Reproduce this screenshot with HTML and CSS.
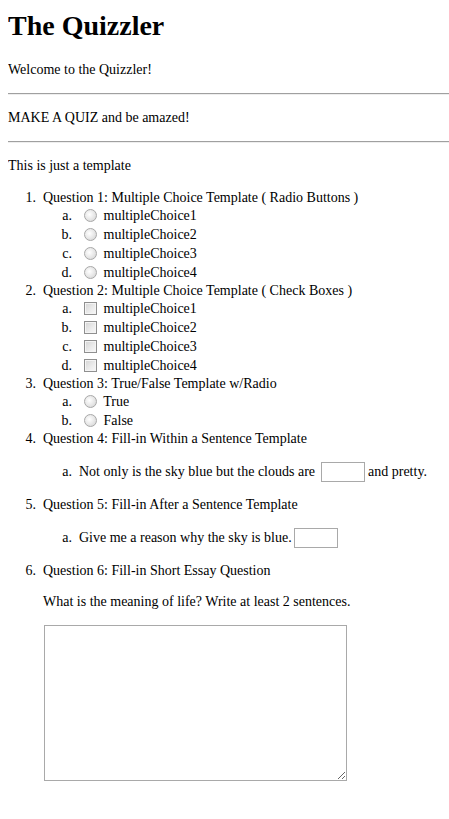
FILE: index.html
```html
<!DOCTYPE html>
<html>
<head>
<meta charset="utf-8">
<title>The Quizzler</title>
<link rel="stylesheet" href="styles.css">
</head>
<body>
<h1 class="title">The Quizzler</h1>
<p class="para">Welcome to the Quizzler!</p>
<hr class="rule">
<p class="para">MAKE A QUIZ and be amazed!</p>
<hr class="rule">
<p class="para">This is just a template</p>
<ol class="quiz">
  <li>Question 1: Multiple Choice Template ( Radio Buttons )
    <ol class="opts">
      <li><input class="radio" type="radio" name="q1"> multipleChoice1</li>
      <li><input class="radio" type="radio" name="q1"> multipleChoice2</li>
      <li><input class="radio" type="radio" name="q1"> multipleChoice3</li>
      <li><input class="radio" type="radio" name="q1"> multipleChoice4</li>
    </ol>
  </li>
  <li>Question 2: Multiple Choice Template ( Check Boxes )
    <ol class="opts">
      <li><input class="check" type="checkbox"> multipleChoice1</li>
      <li><input class="check" type="checkbox"> multipleChoice2</li>
      <li><input class="check" type="checkbox"> multipleChoice3</li>
      <li><input class="check" type="checkbox"> multipleChoice4</li>
    </ol>
  </li>
  <li>Question 3: True/False Template w/Radio
    <ol class="opts">
      <li><input class="radio" type="radio" name="q3"> True</li>
      <li><input class="radio" type="radio" name="q3"> False</li>
    </ol>
  </li>
  <li>Question 4: Fill-in Within a Sentence Template
    <ol class="opts spaced">
      <li>Not only is the sky blue but the clouds are <input class="blank" type="text"> and pretty.</li>
    </ol>
  </li>
  <li>Question 5: Fill-in After a Sentence Template
    <ol class="opts spaced">
      <li>Give me a reason why the sky is blue.<input class="blank" type="text"></li>
    </ol>
  </li>
  <li>Question 6: Fill-in Short Essay Question
    <p class="para">What is the meaning of life? Write at least 2 sentences.</p>
    <textarea class="essay"></textarea>
  </li>
</ol>
</body>
</html>
```

FILE: styles.css
```css
html {
  background: #fff;
}

body {
  margin: 10px 0 8px 8px;
  font-family: "Liberation Serif", "Times New Roman", serif;
  font-size: 14px;
  line-height: 18px;
  color: #000;
}

.title {
  font-size: 28px;
  line-height: 32px;
  font-weight: bold;
  margin: 0 0 19px;
}

.para {
  margin: 14px 0;
  line-height: 18px;
}

.rule {
  margin: 7px 0;
  border: 0;
  border-top: 1px solid #a0a0a0;
  border-bottom: 1px solid #eeeeee;
  height: 0;
}

.quiz {
  margin: 14px 0;
  padding-left: 35px;
}

.quiz > li {
  line-height: 17px;
}

.quiz > li::marker {
  content: counter(list-item) ".\2002";
}

.opts {
  list-style-type: lower-alpha;
  margin: 0;
  padding-left: 36px;
}

.opts > li {
  line-height: 19px;
}

.opts > li::marker {
  content: counter(list-item, lower-alpha) ".\2002";
}

.opts.spaced {
  margin: 14px 0;
}

.opts.spaced > li {
  line-height: 21px;
}

.radio {
  -webkit-appearance: none;
  appearance: none;
  width: 13px;
  height: 13px;
  box-sizing: border-box;
  margin: 0 3px 0 5px;
  border: 1px solid #a8a8a8;
  border-radius: 50%;
  background: radial-gradient(circle at 40% 40%, #ffffff 0%, #e6e6e6 55%, #cfcfcf 100%);
  vertical-align: -2px;
}

.check {
  -webkit-appearance: none;
  appearance: none;
  width: 13px;
  height: 13px;
  box-sizing: border-box;
  margin: 0 3px 0 5px;
  border: 1px solid #8f8f8f;
  box-shadow: inset 0 0 0 1px #f4f4f4;
  background: linear-gradient(135deg, #d4d4d4 0%, #ececec 60%, #f8f8f8 100%);
  vertical-align: -2px;
}

.blank {
  width: 44px;
  height: 20px;
  box-sizing: border-box;
  margin: 0 0 0 2px;
  padding: 0 2px;
  border: 1px solid #a9a9a9;
  font-family: inherit;
  font-size: 14px;
  line-height: 16px;
  vertical-align: baseline;
  background: #fff;
}

.essay {
  display: block;
  width: 303px;
  height: 156px;
  box-sizing: border-box;
  margin: 14px 0 0 1px;
  border: 1px solid #a9a9a9;
  resize: both;
  font: inherit;
}
```
